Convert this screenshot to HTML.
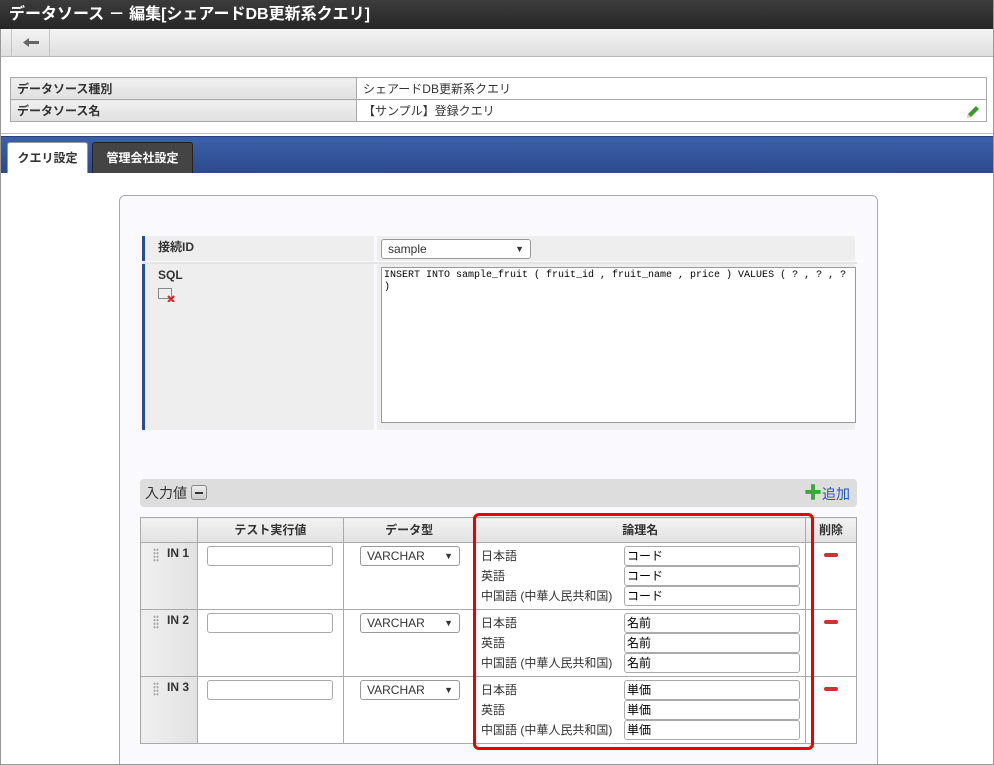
<!DOCTYPE html>
<html style="width:994px;height:765px;overflow:hidden"><head><meta charset="utf-8"><style>
*{box-sizing:border-box;margin:0;padding:0}
body{width:994px;height:765px;overflow:hidden;background:#fff;font-family:"Liberation Sans","Noto Sans CJK JP",sans-serif;font-size:12px;color:#333;position:relative}
.a{position:absolute}
.title{left:0;top:0;width:994px;height:29px;background:linear-gradient(#3c3c3c,#262626);color:#fff;font-weight:bold;font-size:16px;line-height:29px;padding-left:9px}
.tool{left:0;top:29px;width:994px;height:28px;background:linear-gradient(#f4f4f4,#dedede);border-bottom:1px solid #b8b8b8}
.back{left:11px;top:29px;width:39px;height:27px;border-left:1px solid #c4c4c4;border-right:1px solid #c4c4c4}
.info{left:10px;top:77px;width:977px;border-collapse:collapse}
.info td{border:1px solid #aaa;height:22px;padding:0 6px;font-size:12px}
.info td.l{width:346px;background:linear-gradient(#f0f0f0,#e0e0e0);font-weight:bold;color:#333}
.band{left:0;top:136px;width:994px;height:37px;background:linear-gradient(#3b60aa,#2c4a8c);border-top:1px solid #2a3f7a}
.tab{top:142px;height:31px;line-height:30px;font-weight:bold;text-align:center;border-radius:3px 3px 0 0}
.panel{left:119px;top:195px;width:759px;height:575px;background:#fafafe;border:1px solid #aaa;border-radius:6px}
.lbl{background:#eee;font-weight:bold;padding-left:13px;border-left:3px solid #2b4c8c}
.sel{background:#fff;border:1px solid #999;border-radius:3px;height:20px;line-height:18px;padding-left:6px;font-size:12px}
.inp{background:#fff;border:1px solid #aaa;border-radius:3px;height:20px;line-height:18px;padding-left:2px;font-size:12px;color:#000}
table.g{position:absolute;left:140px;top:517px;border-collapse:collapse;width:717px}
table.g td,table.g th{border:1px solid #aaa;vertical-align:top}
table.g th{height:25px;background:linear-gradient(#f2f2f2,#e2e2e2);font-weight:bold;font-size:12px;color:#333;line-height:24px}
table.g td{height:67px;background:#fff}
table.g td.rl{background:linear-gradient(90deg,#f0f0f0,#e2e2e2);font-weight:bold;padding:4px 0 0 26px;line-height:12px}
.dot{position:absolute;left:12px;top:5px;width:6px;height:14px;background:radial-gradient(circle,#aaa 1px,transparent 1.2px) 0 0/3px 3.5px}
.minus{position:absolute;width:14px;height:4px;background:#c33;border-radius:2px}
</style></head><body>
<div class="a title">データソース － 編集[シェアードDB更新系クエリ]</div>
<div class="a tool"></div>
<div class="a back"><svg width="39" height="27"><path d="M11 13.5 L17 9 V12 H27 V15 H17 V18 Z" fill="#666"/></svg></div>
<table class="a info"><tr><td class="l">データソース種別</td><td>シェアードDB更新系クエリ</td></tr><tr><td class="l">データソース名</td><td style="position:relative">【サンプル】登録クエリ<svg style="position:absolute;right:6px;top:3px" width="16" height="16"><path d="M3 15 L4 11 L12 3 L15 6 L7 14 Z" fill="#3a9a2a"/><path d="M3 15 L4 11 L7 14 Z" fill="#e8d3a0"/></svg></td></tr></table>
<div class="a" style="left:0;top:133px;width:994px;height:1px;background:#bbb"></div>
<div class="a band"></div>
<div class="a tab" style="left:7px;width:81px;background:#fff;color:#333;border:1px solid #999;border-bottom:none">クエリ設定</div>
<div class="a tab" style="left:92px;width:101px;background:#444;color:#fff;border:1px solid #222;border-bottom:none">管理会社設定</div>
<div class="a panel"></div>
<div class="a lbl" style="left:142px;top:236px;width:232px;height:25px;line-height:22px">接続ID</div>
<div class="a" style="left:377px;top:236px;width:478px;height:25px;background:#eee"></div>
<div class="a sel" style="left:381px;top:239px;width:150px">sample<span style="position:absolute;right:6px;font-size:9px">▼</span></div>
<div class="a" style="left:142px;top:262px;width:715px;height:2px;background:#e4e4e4"></div>
<div class="a lbl" style="left:142px;top:264px;width:232px;height:166px;padding-top:4px">SQL
<svg style="display:block;margin-top:6px" width="18" height="14"><rect x="0.5" y="0.5" width="13" height="10" fill="#eee" stroke="#888"/><path d="M10 8 L16 14 M16 8 L10 14" stroke="#e02020" stroke-width="2"/></svg></div>
<div class="a" style="left:377px;top:264px;width:478px;height:166px;background:#eee"></div>
<div class="a" style="left:381px;top:267px;width:475px;height:156px;background:#fff;border:1px solid #999;font-family:'Liberation Mono',monospace;font-size:10px;line-height:12px;padding:2px;color:#000">INSERT INTO sample_fruit ( fruit_id , fruit_name , price ) VALUES ( ? , ? , ?<br>)</div>
<div class="a" style="left:140px;top:479px;width:717px;height:28px;background:#ddd;border-radius:4px;font-size:14px;line-height:28px;padding-left:5px">入力値 <span style="display:inline-block;width:16px;height:15px;border:1px solid #888;border-radius:3px;background:linear-gradient(#eee,#ccc);vertical-align:-2px;position:relative"><span style="position:absolute;left:3px;top:6px;width:8px;height:2px;background:#333"></span></span></div>
<div class="a" style="left:804px;top:479px;height:28px;line-height:28px;font-size:14px;color:#2255bb"><span style="color:#3a3;font-weight:bold;font-size:18px">✚</span>追加</div>
<table class="g">
<tr><th style="width:57px"></th><th style="width:146px">テスト実行値</th><th style="width:132px">データ型</th><th style="width:331px">論理名</th><th style="width:51px">削除</th></tr>
<tr><td class="rl" style="position:relative"><span class="dot"></span>IN 1</td><td></td><td></td><td></td><td></td></tr>
<tr><td class="rl" style="position:relative"><span class="dot"></span>IN 2</td><td></td><td></td><td></td><td></td></tr>
<tr><td class="rl" style="position:relative"><span class="dot"></span>IN 3</td><td></td><td></td><td></td><td></td></tr>
</table>
<div id="rows"></div>
<script>
var vals=["コード","名前","単価"],h="";
for(var i=0;i<3;i++){var y=546+i*67;
h+='<div class="a inp" style="left:207px;top:'+y+'px;width:126px"></div>';
h+='<div class="a sel" style="left:360px;top:'+y+'px;width:100px">VARCHAR<span style="position:absolute;right:6px;font-size:9px">▼</span></div>';
var ls=["日本語","英語","中国語 (中華人民共和国)"];
for(var j=0;j<3;j++){h+='<div class="a" style="left:481px;top:'+(y+j*20)+'px;line-height:20px">'+ls[j]+'</div>';
h+='<div class="a inp" style="left:624px;top:'+(y+j*20)+'px;width:176px">'+vals[i]+'</div>';}
h+='<div class="a minus" style="left:824px;top:'+(y+7)+'px"></div>';}
document.getElementById("rows").innerHTML=h;
</script>
<div class="a" style="left:473px;top:513px;width:341px;height:237px;border:3px solid #e00;border-radius:6px"></div>
<div class="a" style="left:993px;top:0;width:1px;height:765px;background:#999"></div>
<div class="a" style="left:0;top:764px;width:994px;height:1px;background:#999"></div>
<div class="a" style="left:0;top:29px;width:1px;height:736px;background:#999"></div>
</body></html>
